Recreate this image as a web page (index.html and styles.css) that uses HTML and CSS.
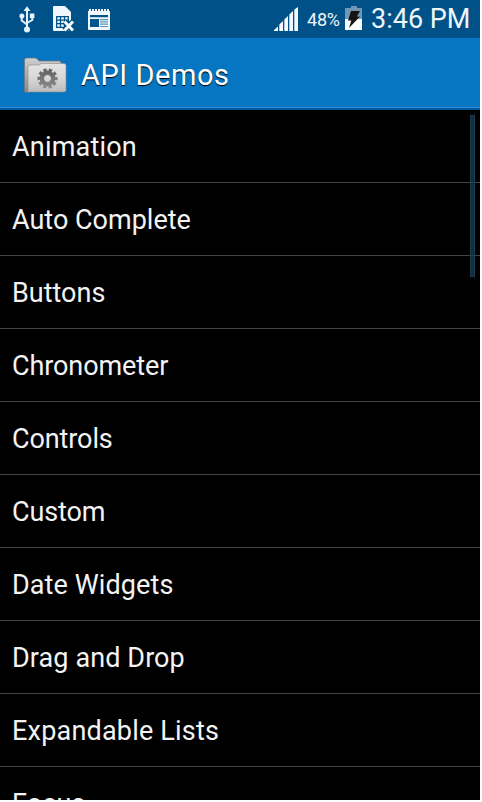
FILE: index.html
```html
<!DOCTYPE html>
<html lang="en">
<head>
<meta charset="utf-8">
<title>API Demos</title>
<link rel="stylesheet" href="styles.css">
</head>
<body>
<div class="screen">
  <div class="status">
    <div class="notices">
      <svg class="usb" width="16" height="28" viewBox="0 0 16 28" fill="#e4f2fa" stroke="#e4f2fa">
        <path d="M8 5V24M2.7 12V15.500L8 19.500M13.300 11V15L8 18" fill="none" stroke-width="2"/>
        <path d="M4.500 6 8 1.200l3.500 4.800z" stroke="none"/>
        <circle cx="2.900" cy="11" r="2.500" stroke="none"/>
        <path d="M10.800 8.500h4.600v4.600h-4.600z" stroke="none"/>
        <circle cx="8" cy="24.500" r="3" stroke="none"/>
      </svg>
      <svg class="sim" width="23" height="27" viewBox="0 0 23 27">
        <path d="M1 0H12L18 6V25H1Q0 25 0 24V1Q0 0 1 0z" fill="#eef7fc"/>
        <path d="M3.700 10.700h11.600v10.600H3.700zM3.700 14.200h11.600M3.700 17.700h11.600M7.500 10.700v10.600M11.500 10.700v10.600" fill="none" stroke="#005187" stroke-width="1.300"/>
        <path d="M11.500 15.500 20 24.500M20 15.500 11.500 24.500" stroke="#005187" stroke-width="5.500"/>
        <path d="M11.500 15.500 20 24.500M20 15.500 11.500 24.500" stroke="#fff" stroke-width="2.800"/>
      </svg>
      <svg class="news" width="22" height="21" viewBox="0 0 22 21">
        <path d="M0 2h1V0h2v2h1V0h2v2h1V0h2v2h1V0h2v2h1V0h2v2h1V0h2v2h1V0h2v2h1v18q0 1-1 1H1q-1 0-1-1z" fill="#f2f9fd"/>
        <path d="M2 6h18v2.200H2zM2 10h9v8H2z" fill="#00568c"/>
        <path d="M12 10h8v1.200h-8zM12 12.300h8v1.200h-8zM12 14.600h8v1.200h-8zM12 16.900h8v1.100h-8z" fill="#5b93b8"/>
      </svg>
    </div>
    <div class="system">
      <svg class="signal" width="24" height="24" viewBox="0 0 24 24" fill="#f4faff">
        <path d="M0 24v-1l4-3.500V24zM5.300 24v-6.500L9 14v10zM10.300 24V12.500L14 9v15zM15.300 24V7.500L19 4v20zM20.300 24V2.500L24 0v24z"/>
      </svg>
      <span class="percent">48%</span>
      <svg class="battery" width="17" height="24" viewBox="0 0 17 24">
        <path d="M6 0h6v2h5v11H0V2h6z" fill="#7098b5"/>
        <path d="M0 13h17v11H0z" fill="#fff"/>
        <path d="M6 5h9l-3.200 5.500H15L4 22l2.300-7.500H3z" fill="#151515"/>
      </svg>
      <span class="clock">3:46 PM</span>
    </div>
  </div>
  <header class="bar">
    <svg class="folder" width="44" height="37" viewBox="0 0 44 37">
      <defs>
        <linearGradient id="back" x2="0" y2="1"><stop stop-color="#cfcfd0"/><stop offset="1" stop-color="#88898b"/></linearGradient>
        <linearGradient id="front" x2="0" y2="1"><stop stop-color="#e4e4e4"/><stop offset=".5" stop-color="#d8d8d8"/><stop offset="1" stop-color="#bcbcbc"/></linearGradient>
        <linearGradient id="gear" gradientUnits="userSpaceOnUse" x1="0" y1="-10" x2="0" y2="10"><stop stop-color="#606060"/><stop offset="1" stop-color="#8e8e8e"/></linearGradient>
      </defs>
      <path d="M1.500 35V3Q1.500 1 3.500 1H12q1.500 0 2.500 1.500L16 4H36q2 0 2 2v3H6v26z" fill="url(#back)" stroke="#777" stroke-width=".7"/>
      <path d="M5 33V10q0-2 2-2h8q1 0 2-.7 1-.8 2.500-.8H41q2 0 2 2V33q0 2-2 2H3q2 0 2-2z" fill="url(#front)" stroke="#8a8a8a" stroke-width=".6"/>
      <g transform="translate(24.500 21.500)">
        <g fill="none" stroke="url(#gear)">
          <circle r="5.700" stroke-width="4.400"/>
          <circle r="8.600" stroke-width="3" stroke-dasharray="3.300 2.104" stroke-dashoffset="1.650"/>
        </g>
      </g>
    </svg>
    <h1 class="title">API Demos</h1>
  </header>
  <ul class="list">
    <li class="item wider">Animation</li>
    <li class="item">Auto Complete</li>
    <li class="item">Buttons</li>
    <li class="item tight">Chronometer</li>
    <li class="item tight">Controls</li>
    <li class="item tight">Custom</li>
    <li class="item wide">Date Widgets</li>
    <li class="item wide">Drag and Drop</li>
    <li class="item wider">Expandable Lists</li>
    <li class="item wide">Focus</li>
  </ul>
  <div class="scroll"></div>
</div>
</body>
</html>
```
FILE: styles.css
```css
* { box-sizing: border-box; }
html, body { margin: 0; background: #fff; }
body { font-family: Roboto, "Liberation Sans", sans-serif; height: 802px; overflow: hidden; }
svg { display: block; flex: none; }
.screen { position: relative; width: 480px; height: 800px; overflow: hidden; background: #000; }
.status { display: flex; justify-content: space-between; height: 38px; padding: 0 10px 0 19px; background: #005187; color: #eef6fb; }
.notices, .system { display: flex; align-items: flex-start; }
.usb { margin-top: 5px; }
.sim { margin: 6px 0 0 18px; }
.news { margin: 9px 0 0 12px; }
.signal { margin-top: 7px; }
.percent { margin-left: 9px; width: 33px; font-size: 18px; line-height: 40px; white-space: nowrap; letter-spacing: -.2px; }
.battery { margin: 6px 9px 0 5px; }
.clock { font-size: 27px; line-height: 38px; width: 99px; white-space: nowrap; }
.bar { display: flex; align-items: flex-start; height: 72px; padding: 19px 23px 0; background: linear-gradient(#0676c3 69px, #2a8ed0 69px 70px, #0059a5 70px); }
.title { margin: 0 0 0 14px; font-size: 29px; line-height: 36px; font-weight: 400; letter-spacing: .55px; color: #fff; text-shadow: 0 1px 1px #000; white-space: nowrap; }
.list { margin: 0; padding: 0; list-style: none; }
.item { height: 73px; padding-left: 12px; border-bottom: 1px solid #454545; font-size: 27px; line-height: 74px; color: #f3f3f3; }
.tight { letter-spacing: -.1px; }
.wide { letter-spacing: .1px; }
.wider { letter-spacing: .2px; }
.scroll { position: absolute; left: 470px; top: 115px; width: 5px; height: 162px; border: 1px solid #1c3a50; background: rgba(29, 63, 84, .7); }
```
